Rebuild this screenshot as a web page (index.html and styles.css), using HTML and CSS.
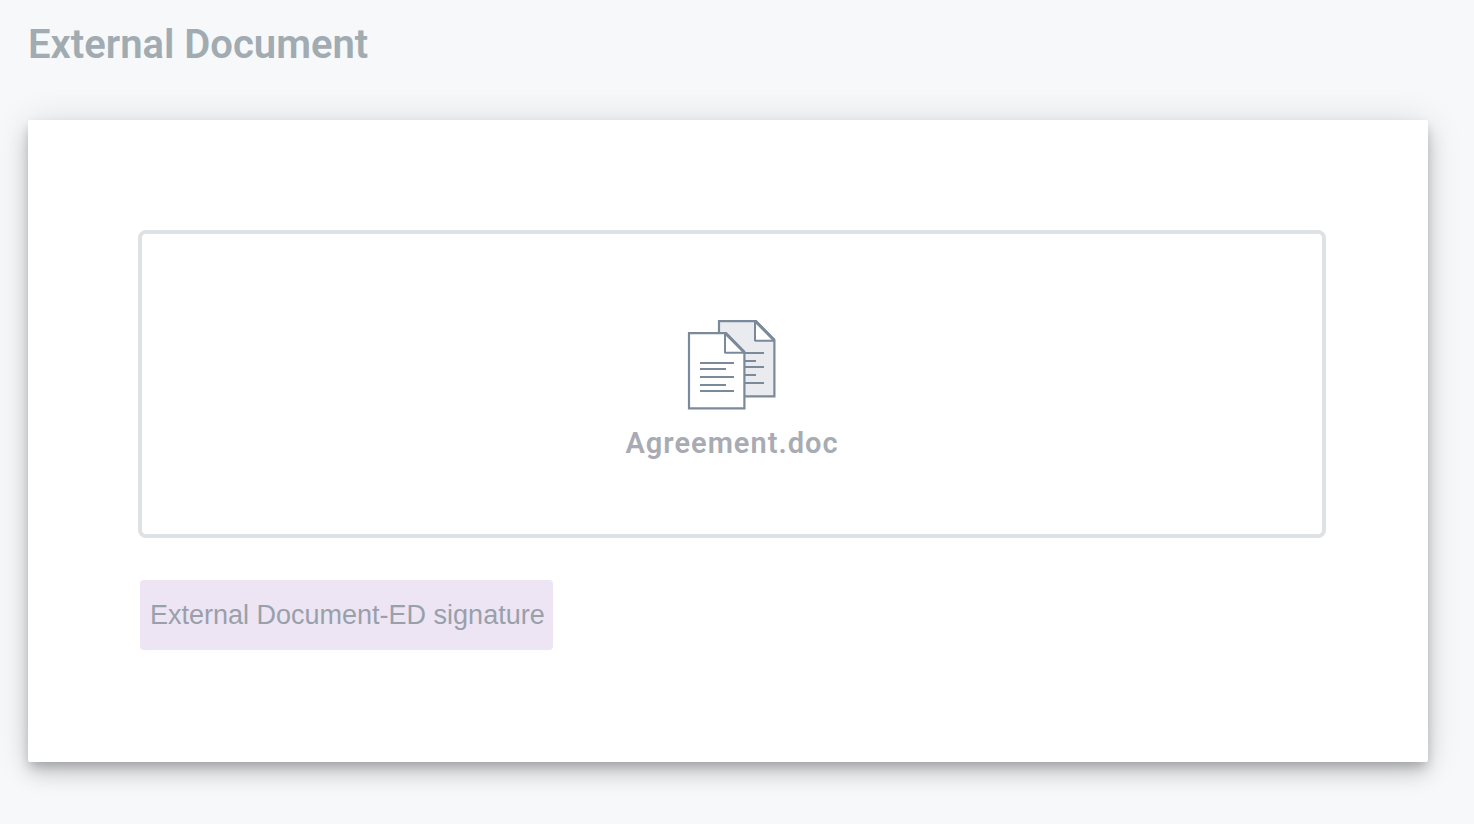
FILE: index.html
```html
<!DOCTYPE html>
<html lang="en">
<head>
<meta charset="utf-8">
<title>External Document</title>
<link rel="stylesheet" href="styles.css">
</head>
<body>
<main class="page">
  <h1 class="page-title">External Document</h1>
  <section class="card">
    <div class="document">
      <svg class="document-icon" viewBox="0 0 90 92" aria-hidden="true" fill="none" stroke="#7b8a9a">
        <path d="M32 3.200h37l18.400 19V78.300H32z" fill="#e9ebef" stroke-width="2.2"/>
        <path d="M68 3.200v19.600h19.400z" fill="#fff" stroke-width="2" stroke-linejoin="bevel"/>
        <path d="M58 35h19M58 43h11M58 49h19M58 57h11M58 65h19" stroke-width="2"/>
        <path d="M2 15.200h37l18.400 19V90.300H2z" fill="#fff" stroke-width="2.2"/>
        <path d="M38 15.200v19.600h19.400z" fill="#fff" stroke-width="2" stroke-linejoin="bevel"/>
        <path d="M38.800 15.600l18.600 18.600M68.800 3.600l18.600 18.600" stroke-width="2.800"/>
        <path d="M13 45h34M13 51h26M13 59h34M13 67h26M13 73h34" stroke-width="2"/>
      </svg>
      <p class="document-name">Agreement.doc</p>
    </div>
    <p class="signature">External Document-ED signature</p>
  </section>
</main>
</body>
</html>
```
FILE: styles.css
```css
* {
  box-sizing: border-box;
}

body {
  margin: 0;
  background: #f7f8fa;
  font-family: Roboto, "Liberation Sans", sans-serif;
}

.page {
  padding: 21px 46px 62px 28px;
}

.page-title {
  margin: 0 0 51px;
  font-size: 40px;
  line-height: 48px;
  font-weight: 600;
  color: #a1abb2;
}

.card {
  padding: 110px 102px 112px 110px;
  border-radius: 2px;
  background: #fff;
  box-shadow:
    0 6px 10px -2px rgba(0, 0, 0, 0.2),
    0 12px 20px rgba(0, 0, 0, 0.14),
    0 2px 36px rgba(0, 0, 0, 0.12);
}

.document {
  display: flex;
  flex-direction: column;
  align-items: center;
  padding: 84px 20px 72px;
  border: 4px solid #dee2e5;
  border-radius: 8px;
}

.document-icon {
  width: 90px;
  height: 92px;
}

.document-name {
  margin: 15px 0 1px;
  font-size: 29px;
  line-height: 36px;
  font-weight: 600;
  letter-spacing: 1px;
  color: #a8abb3;
}

.signature {
  width: fit-content;
  margin: 42px 0 0 2px;
  padding: 17px 8px 17px 10px;
  border-radius: 4px;
  background: #eee5f4;
  font-family: "Liberation Sans", Arial, sans-serif;
  font-size: 27px;
  line-height: 36px;
  color: #98a0aa;
}
```
